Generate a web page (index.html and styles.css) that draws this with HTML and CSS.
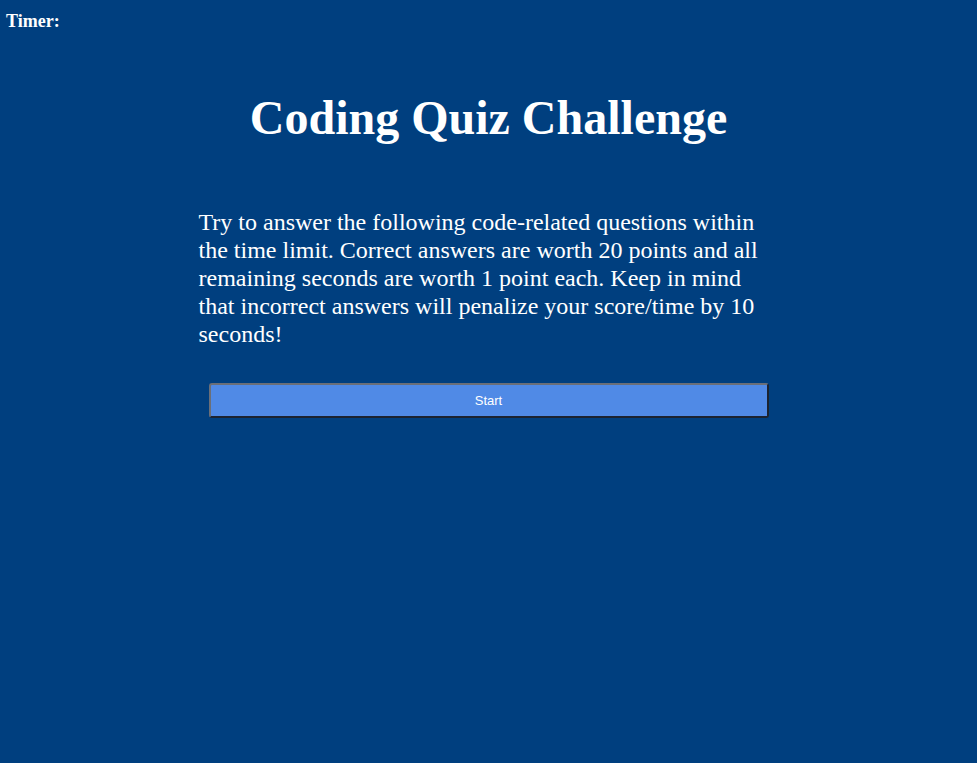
FILE: index.html
```html
<!DOCTYPE html>
<html lang="en">
<head>
<meta charset="utf-8">
<title>Coding Quiz Challenge</title>
<link rel="stylesheet" href="styles.css">
</head>
<body>
<header class="topbar">
  <span class="timer">Timer: <span class="timer-value"></span></span>
</header>
<main class="quiz">
  <h1 class="quiz-title">Coding Quiz Challenge</h1>
  <p class="quiz-intro">Try to answer the following code-related questions within the time limit. Correct answers are worth 20 points and all remaining seconds are worth 1 point each. Keep in mind that incorrect answers will penalize your score/time by 10 seconds!</p>
  <button class="start-btn" type="button">Start</button>
</main>
</body>
</html>
```

FILE: styles.css
```css
html, body {
  margin: 0;
  padding: 0;
  background: #003f7f;
  min-height: 100%;
}
body {
  font-family: "Liberation Serif", "Times New Roman", serif;
  color: #ffffff;
}
.topbar {
  padding: 11px 6px 0;
  height: 21px;
}
.timer {
  font-size: 18px;
  font-weight: bold;
}
.quiz {
  width: 580px;
  margin: 0 auto;
  display: flex;
  flex-direction: column;
}
.quiz-title {
  margin: 58px 0 63px;
  font-size: 48px;
  line-height: 55px;
  font-weight: bold;
  text-align: center;
}
.quiz-intro {
  margin: 0 0 35px;
  font-size: 24px;
  line-height: 28px;
}
.start-btn {
  margin: 0 10px;
  height: 35px;
  background: #508ae6;
  color: #ffffff;
  font-family: "Liberation Sans", Arial, sans-serif;
  font-size: 13px;
  border-style: solid;
  border-width: 2px;
  border-color: #6b6f78 #1c2330 #1c2330 #6b6f78;
  border-radius: 3px;
  cursor: pointer;
}
```
